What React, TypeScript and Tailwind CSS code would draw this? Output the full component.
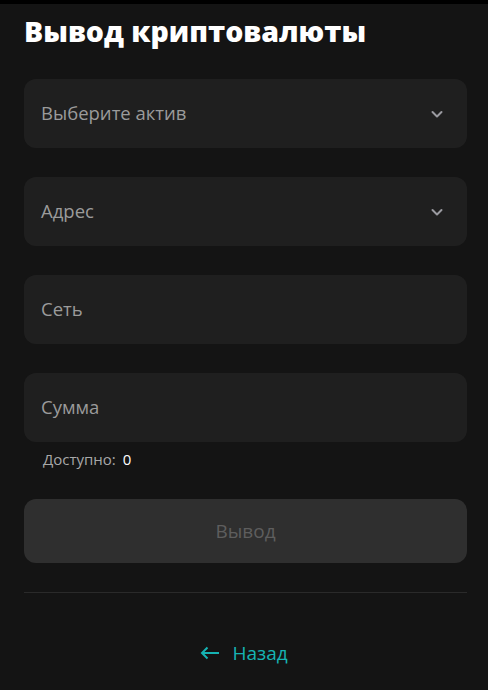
import React from "react";

function Chevron() {
  return (
    <svg width="16" height="16" viewBox="0 0 16 16" fill="none" className="text-[#9a9aa0]">
      <path d="M3.5 6l4.5 4.5L12.5 6" stroke="currentColor" strokeWidth="2" strokeLinecap="round" strokeLinejoin="round" />
    </svg>
  );
}

function Field({ label, chevron }: { label: string; chevron?: boolean }) {
  return (
    <div className="h-[69px] rounded-[12px] bg-[#1f1f1f] flex items-center justify-between pl-[17px] pr-[22px]">
      <span className="text-[18.5px] leading-[24px] text-[#9b9b9b] -mt-[2px]">{label}</span>
      {chevron && <Chevron />}
    </div>
  );
}

export default function App() {
  return (
    <div className="min-h-[690px] bg-[#141414] border-t-4 border-black" style={{ fontFamily: '"Open Sans", "Noto Sans", sans-serif' }}>
      <div className="w-[443px] ml-6 pt-[10px]">
        <h1 className="text-[28.5px] leading-[34px] font-extrabold text-white">Вывод криптовалюты</h1>
        <div className="mt-[31px] flex flex-col gap-[29px]">
          <Field label="Выберите актив" chevron />
          <Field label="Адрес" chevron />
          <Field label="Сеть" />
          <div>
            <Field label="Сумма" />
            <div className="mt-[7px] pl-[19px] flex gap-[7px] text-[15px] leading-[20px]">
              <span className="text-[#a8a8a8]">Доступно:</span>
              <span className="text-white">0</span>
            </div>
          </div>
        </div>
        <button className="mt-[30px] w-full h-[64px] rounded-[12px] bg-[#2f2f2f] text-[19px] text-[#5e5e5e]">Вывод</button>
        <div className="mt-[29px] h-px bg-[#2a2a2a]" />
        <div className="mt-[46px] flex justify-center pr-[3px]">
          <button className="flex items-center gap-[12px] text-[19px] text-[#16b3b3]">
            <svg width="20" height="14" viewBox="0 0 20 14" fill="none">
              <path d="M19 7H2M7.5 1.5L2 7l5.5 5.5" stroke="currentColor" strokeWidth="2" />
            </svg>
            Назад
          </button>
        </div>
      </div>
    </div>
  );
}
